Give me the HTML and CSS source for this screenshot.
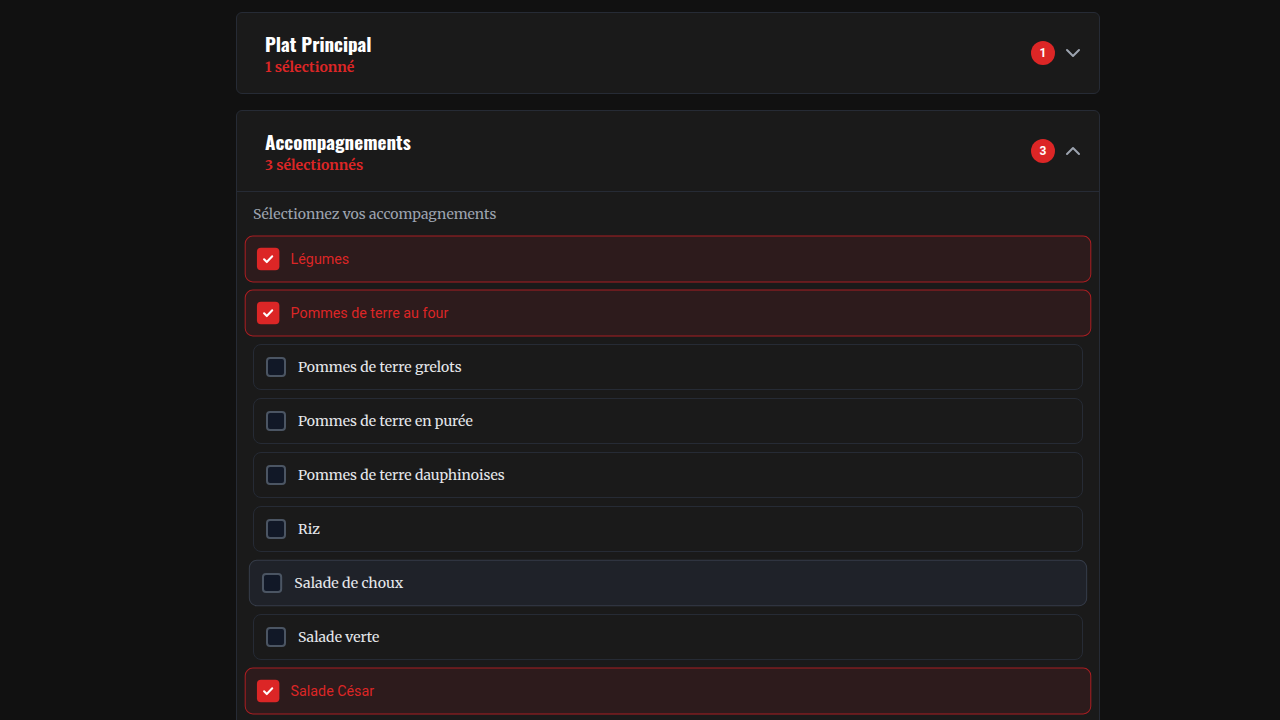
FILE: index.html
```html
<!DOCTYPE html>
<html lang="fr">
<head>
    <meta charset="UTF-8">
    <meta name="viewport" content="width=device-width, initial-scale=1.0">
    <title>Composez votre repas</title>
    <link rel="stylesheet" href="styles.css">
</head>
<body>

    <div class="page">
        <main class="menu">

            <section class="menu-card">
                <header class="menu-card-header">
                    <div class="menu-card-title">
                        <h2>Plat Principal</h2>
                        <p class="count">1 sélectionné</p>
                    </div>
                    <div class="menu-card-meta">
                        <span class="badge">1</span>
                        <svg class="chevron" viewBox="0 0 24 24" width="24" height="24"><polyline points="6 9 12 15 18 9"/></svg>
                    </div>
                </header>
            </section>

            <section class="menu-card open">
                <header class="menu-card-header">
                    <div class="menu-card-title">
                        <h2>Accompagnements</h2>
                        <p class="count">3 sélectionnés</p>
                    </div>
                    <div class="menu-card-meta">
                        <span class="badge">3</span>
                        <svg class="chevron" viewBox="0 0 24 24" width="24" height="24"><polyline points="6 15 12 9 18 15"/></svg>
                    </div>
                </header>

                <div class="menu-card-body">
                    <p class="hint">Sélectionnez vos accompagnements</p>
                    <ul class="options">
                        <li class="option selected">
                            <span class="box"><svg viewBox="0 0 24 24"><polyline points="6 12.5 10 16.5 18 8"/></svg></span>
                            <span class="label">Légumes</span>
                        </li>
                        <li class="option selected">
                            <span class="box"><svg viewBox="0 0 24 24"><polyline points="6 12.5 10 16.5 18 8"/></svg></span>
                            <span class="label">Pommes de terre au four</span>
                        </li>
                        <li class="option">
                            <span class="box"></span>
                            <span class="label">Pommes de terre grelots</span>
                        </li>
                        <li class="option">
                            <span class="box"></span>
                            <span class="label">Pommes de terre en purée</span>
                        </li>
                        <li class="option">
                            <span class="box"></span>
                            <span class="label">Pommes de terre dauphinoises</span>
                        </li>
                        <li class="option">
                            <span class="box"></span>
                            <span class="label">Riz</span>
                        </li>
                        <li class="option hover">
                            <span class="box"></span>
                            <span class="label">Salade de choux</span>
                        </li>
                        <li class="option">
                            <span class="box"></span>
                            <span class="label">Salade verte</span>
                        </li>
                        <li class="option selected">
                            <span class="box"><svg viewBox="0 0 24 24"><polyline points="6 12.5 10 16.5 18 8"/></svg></span>
                            <span class="label">Salade César</span>
                        </li>
                    </ul>
                </div>
            </section>

        </main>
    </div>

</body>
</html>
```

FILE: styles.css
```css
:root {
    --page-bg: #111111;
    --card-bg: #1a1a1a;
    --card-border: #262b35;
    --red: #dc2626;
    --red-border: #a81e22;
    --red-bg: #2d1b1c;
    --muted: #9ca3af;
    --text: #e5e7eb;
    --title-font: 'Oswald', 'Liberation Sans Narrow', 'DejaVu Sans Condensed', 'Roboto', sans-serif;
    --serif-font: 'Merriweather', 'DejaVu Serif', serif;
}
* { box-sizing: border-box; }
body {
    margin: 0;
    background: var(--page-bg);
    color: var(--text);
    font-family: var(--serif-font);
}
.page {
    padding: 12px 0 0 56px;
}
.menu {
    max-width: 864px;
    margin: 0 auto;
    display: flex;
    flex-direction: column;
    gap: 16px;
}
.menu-card {
    background: var(--card-bg);
    border: 1px solid var(--card-border);
    border-radius: 6px;
}
.menu-card-header {
    display: flex;
    align-items: center;
    justify-content: space-between;
    padding: 16px 14px 16px 28px;
}
.open .menu-card-header {
    border-bottom: 1px solid var(--card-border);
}
.menu-card-title h2 {
    margin: 0;
    font-family: var(--title-font);
    font-stretch: condensed;
    font-size: 19px;
    line-height: 28px;
    font-weight: 700;
    color: #ffffff;
}
.menu-card-title .count {
    margin: 0;
    font-size: 14px;
    line-height: 20px;
    font-weight: 700;
    color: var(--red);
}
.menu-card-meta {
    display: flex;
    align-items: center;
    gap: 6px;
}
.badge {
    width: 24px;
    height: 24px;
    border-radius: 50%;
    background: var(--red);
    color: #ffffff;
    font-family: 'Roboto', sans-serif;
    font-size: 12px;
    font-weight: 700;
    display: flex;
    align-items: center;
    justify-content: center;
}
.chevron {
    fill: none;
    stroke: var(--muted);
    stroke-width: 2;
    stroke-linecap: round;
    stroke-linejoin: round;
}
.menu-card-body {
    padding: 12px 16px 16px;
}
.hint {
    margin: 0 0 12px;
    font-size: 14px;
    line-height: 20px;
    color: var(--muted);
}
.options {
    list-style: none;
    margin: 0;
    padding: 0;
    display: flex;
    flex-direction: column;
    gap: 8px;
}
.option {
    display: flex;
    align-items: center;
    gap: 12px;
    height: 46px;
    padding: 0 12px;
    border: 1px solid var(--card-border);
    border-radius: 8px;
    background: var(--card-bg);
    font-size: 14px;
    color: var(--text);
}
.option .box {
    width: 20px;
    height: 20px;
    border: 2px solid #4b5563;
    border-radius: 4px;
    background: #111827;
    display: flex;
    align-items: center;
    justify-content: center;
    flex-shrink: 0;
}
.option.hover {
    background: #1f2229;
    border-color: #363d4a;
    transform: scale(1.01);
}
.option.selected {
    background: var(--red-bg);
    border-color: var(--red-border);
    transform: scale(1.02);
    font-family: 'Roboto', sans-serif;
    color: var(--red);
}
.option.selected .box {
    width: 22px;
    height: 22px;
    margin-left: -1px;
    margin-right: -1px;
    border: none;
    background: var(--red);
}
.option.selected .box svg {
    width: 16px;
    height: 16px;
    fill: none;
    stroke: #ffffff;
    stroke-width: 3;
    stroke-linecap: round;
    stroke-linejoin: round;
}
```
